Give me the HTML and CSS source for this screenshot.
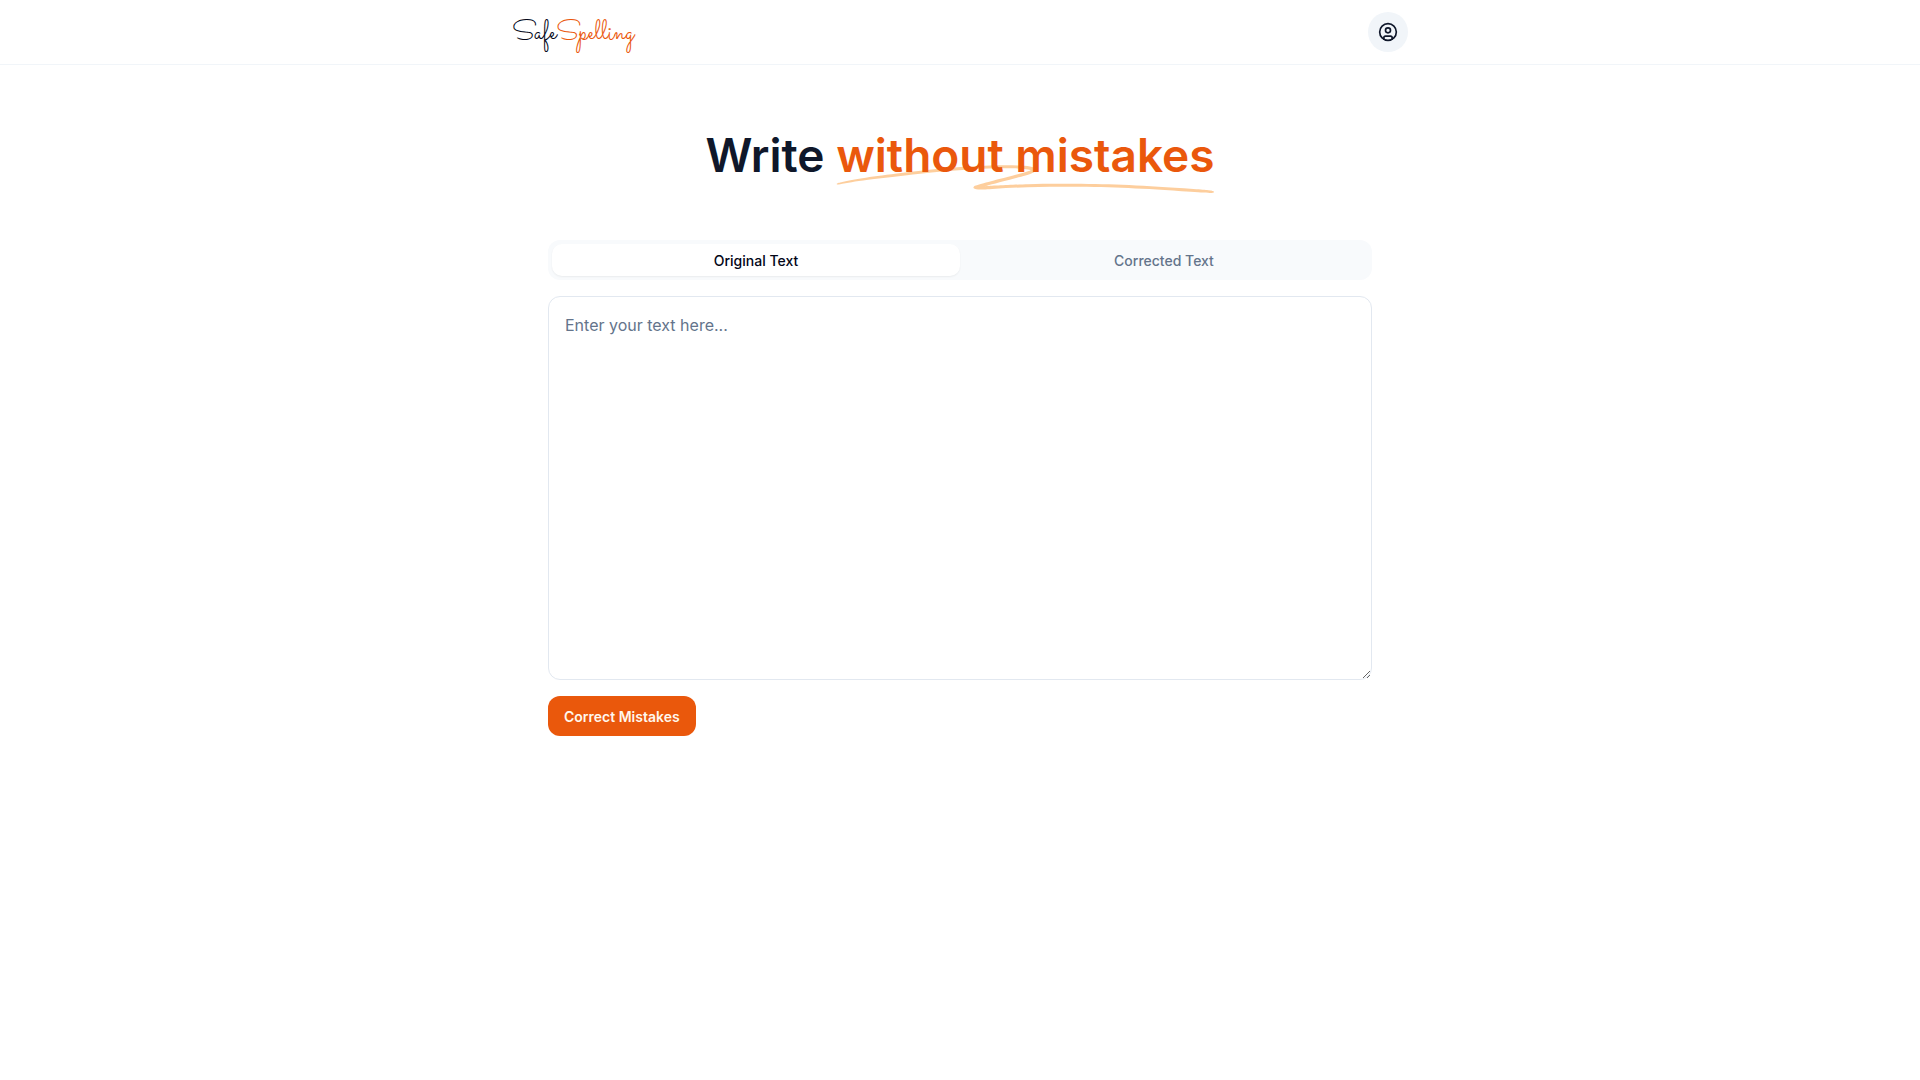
FILE: index.html
```html
<!DOCTYPE html>
<html lang="en">
    <head>
    <meta charset="utf-8">
    <title>SafeSpelling</title>
    <link rel="stylesheet" href="styles.css">
    </head>

    <body>
        <header class="header">
            <div class="header-inner">
                <a class="logo" href="#">Safe<span>Spelling</span></a>
                <button class="user" type="button" aria-label="Account">
                    <svg viewBox="0 0 24 24" width="20" height="20" fill="none" stroke="currentColor" stroke-width="2" stroke-linecap="round" stroke-linejoin="round">
                        <circle cx="12" cy="12" r="10"/>
                        <circle cx="12" cy="10" r="3"/>
                        <path d="M7 20.662V19a2 2 0 0 1 2-2h6a2 2 0 0 1 2 2v1.662"/>
                    </svg>
                </button>
            </div>
        </header>

        <main class="main">
            <h1 class="title">Write
                <span class="marked">
                    <svg class="squiggle" viewBox="0 0 418 42" preserveAspectRatio="none" aria-hidden="true">
                        <path d="M203.371.916c-26.013-2.078-76.686 1.963-124.73 9.946L67.3 12.749C35.421 18.062 18.2 21.766 6.004 25.934 1.244 27.561.828 27.778.874 28.61c.07 1.214.828 1.121 9.595-1.176 9.072-2.377 17.15-3.92 39.246-7.496C123.565 7.986 157.869 4.492 195.942 5.046c7.461.108 19.25 1.696 19.17 2.582-.107 1.183-7.874 4.31-25.75 10.366-21.992 7.45-35.43 12.534-36.701 13.884-2.173 2.308-.202 4.407 4.442 4.734 2.654.187 3.263.157 15.593-.78 35.401-2.686 57.944-3.488 88.365-3.143 46.327.526 75.721 2.23 130.788 7.584 19.787 1.924 20.814 1.98 24.557 1.332l.066-.011c1.201-.203 1.53-1.825.399-2.335-2.911-1.31-4.893-1.604-22.048-3.261-57.509-5.556-87.871-7.36-132.059-7.842-23.239-.254-33.617-.116-50.627.674-11.629.54-42.371 2.494-46.696 2.967-2.359.259 8.133-3.625 26.504-9.81 23.239-7.825 27.934-10.149 28.304-14.005.417-4.348-3.529-6-16.878-7.066Z"/>
                    </svg>
                    <span class="marked-text">without mistakes</span>
                </span>
            </h1>

            <div class="tabs" role="tablist">
                <button class="tab current" type="button" role="tab" aria-selected="true">Original Text</button>
                <button class="tab" type="button" role="tab" aria-selected="false">Corrected Text</button>
            </div>

            <form class="editor">
                <textarea class="text" aria-label="Original text" placeholder="Enter your text here..."></textarea>
                <button class="submit" type="button">Correct Mistakes</button>
            </form>
        </main>
    </body>
</html>
```

FILE: styles.css
```css
*{
    padding:0;
    margin:0;
    box-sizing: border-box;
}

body{
    font-family: Inter, "Liberation Sans", sans-serif;
    color: #0f172a;
    background-color: #fff;
}

button{
    border:0;
    font-family: inherit;
    cursor: pointer;
}

/* header */
.header{
    padding:12px 16px;
    border-bottom:1px solid #f1f5f9;
}

.header-inner{
    display:flex;
    align-items: center;
    justify-content: space-between;
    max-width:896px;
    margin:0 auto;
}

.logo{
    padding-top:4px;
    font: 400 27px/36px "Sacramento", cursive;
    color: #020617;
    text-decoration: none;
}

.logo span{
    color: #ea580c;
}

.user{
    display:flex;
    align-items: center;
    justify-content: center;
    width:40px;
    height:40px;
    border-radius: 50%;
    color: #0f172a;
    background-color: #f1f5f9;
}

/* page content */
.main{
    max-width:856px;
    margin:0 auto;
    padding:60px 16px;
}

.title{
    margin-bottom:55px;
    font-size:46px;
    font-weight:600;
    line-height:60px;
    text-align: center;
}

.marked{
    position:relative;
    display:inline-block;
    color: #ea580c;
}

/* hand drawn line under the words */
.squiggle{
    position:absolute;
    left:0;
    top:66%;
    width:100%;
    height:28px;
    fill: #fdba74;
    opacity: 0.7;
}

.marked-text{
    position:relative;
}

.tabs{
    display:flex;
    height:40px;
    padding:4px;
    margin-bottom:16px;
    border-radius: 12px;
    background-color: #f8fafc;
}

.tab{
    flex:1;
    border-radius: 10px;
    font-size:14px;
    font-weight:500;
    color: #64748b;
    background-color: transparent;
}

.tab.current{
    color: #020617;
    background-color: #fff;
    box-shadow: 0 1px 2px rgba(0,0,0,0.06);
}

.editor{
    display:flex;
    flex-direction: column;
    align-items: flex-start;
    gap:16px;
}

.text{
    width:100%;
    height:384px;
    padding:16px;
    border:1px solid #e2e8f0;
    border-radius: 12px;
    font-family: inherit;
    font-size:16px;
    line-height:24px;
    color: #0f172a;
    resize: vertical;
}

.text::placeholder{
    color: #64748b;
}

.submit{
    height:40px;
    padding:0 16px;
    border-radius: 12px;
    font-size:14px;
    font-weight:600;
    color: #fff7ed;
    background-color: #ea580c;
}
```
